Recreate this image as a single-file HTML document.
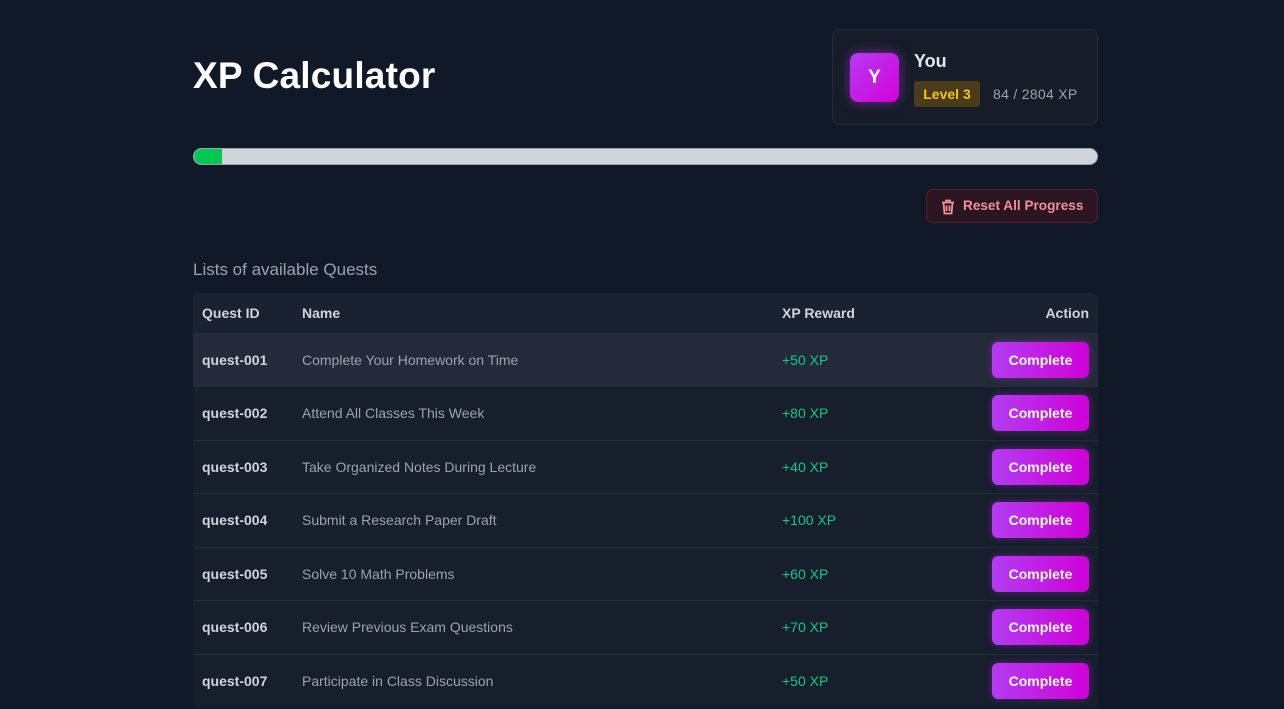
<!DOCTYPE html>
<html><head><style>
*{box-sizing:border-box;margin:0;padding:0}
body{width:1284px;height:709px;overflow:hidden;background:#111827;font-family:"Liberation Sans",sans-serif;color:#e5e7eb;position:relative}
.title{position:absolute;left:193px;top:55px;font-size:37px;font-weight:bold;color:#fff;letter-spacing:0.2px}
.card{position:absolute;left:832px;top:29px;width:266px;height:96px;border:1px solid #242b38;border-radius:8px;background:#161c28}
.av{position:absolute;left:17px;top:23px;width:49px;height:49px;border-radius:8px;background:linear-gradient(135deg,#b53cf5,#d400d8);box-shadow:0 0 12px rgba(190,60,245,.5);color:#fff;font-weight:bold;font-size:19px;text-align:center;line-height:49px}
.you{position:absolute;left:81px;top:21px;font-size:18px;font-weight:bold;color:#e5e7eb}
.lvl{position:absolute;left:81px;top:51px;width:66px;height:26px;background:#4a3c1a;border-radius:3px;color:#f5c518;font-size:14px;font-weight:bold;line-height:26px;text-align:center}
.xp{position:absolute;left:160px;top:56px;font-size:14px;color:#9ca3af;letter-spacing:0.3px}
.bar{position:absolute;left:193px;top:148px;width:905px;height:17px;border-radius:9px;background:#d1d5db;border:1px solid #9ca3af;overflow:hidden}
.bar div{width:28px;height:100%;background:#00c853;border-radius:9px 0 0 9px}
.reset{position:absolute;left:926px;top:189px;width:172px;height:34px;border:1px solid #5a1f2e;background:#2a1520;border-radius:7px;color:#f0909a;font-size:13.6px;font-weight:bold;line-height:32px;padding-left:36px}
.reset svg{position:absolute;left:14px;top:9px}
.sub{position:absolute;left:193px;top:260px;font-size:17px;color:#9ca3af}
table{position:absolute;left:193px;top:293px;width:905px;border-collapse:collapse;background:#171e2c;border-radius:6px;overflow:hidden}
th{height:40px;text-align:left;font-size:14px;font-weight:bold;color:#d1d5db;padding:0 9px;background:#1a2130}
td{height:53.5px;font-size:14px;color:#9ca3af;padding:0 9px;border-top:1px solid #252c3b;vertical-align:middle;line-height:20px}
td.id{font-weight:bold;color:#d1d5db}
td.g{color:#10c98a}
tr.h td{background:#242a39}
.btn{display:inline-block;vertical-align:middle;width:97px;height:36px;border-radius:6px;background:linear-gradient(90deg,#b33cf2,#d000d8);color:#fff;font-weight:bold;font-size:14px;line-height:36px;text-align:center;box-shadow:0 0 8px rgba(190,60,245,.35)}
</style></head><body>
<div class="title">XP Calculator</div>
<div class="card"><div class="av">Y</div><div class="you">You</div><div class="lvl">Level 3</div><div class="xp">84 / 2804 XP</div></div>
<div class="bar"><div></div></div>
<div class="reset"><svg width="14" height="16" viewBox="0 0 14 16" fill="none" stroke="#f0909a" stroke-width="1.8"><path d="M1 3.5h12M5 3.5V1.5h4v2M2.5 3.5l1 11h7l1-11M5.5 6.5v5.5M8.5 6.5v5.5"/></svg>Reset All Progress</div>
<div class="sub">Lists of available Quests</div>
<table>
<tr><th style="width:100px">Quest ID</th><th style="width:480px">Name</th><th>XP Reward</th><th style="text-align:right">Action</th></tr>
<tr class="h"><td class="id">quest-001</td><td>Complete Your Homework on Time</td><td class="g">+50 XP</td><td style="text-align:right"><span class="btn">Complete</span></td></tr>
<tr><td class="id">quest-002</td><td>Attend All Classes This Week</td><td class="g">+80 XP</td><td style="text-align:right"><span class="btn">Complete</span></td></tr>
<tr><td class="id">quest-003</td><td>Take Organized Notes During Lecture</td><td class="g">+40 XP</td><td style="text-align:right"><span class="btn">Complete</span></td></tr>
<tr><td class="id">quest-004</td><td>Submit a Research Paper Draft</td><td class="g">+100 XP</td><td style="text-align:right"><span class="btn">Complete</span></td></tr>
<tr><td class="id">quest-005</td><td>Solve 10 Math Problems</td><td class="g">+60 XP</td><td style="text-align:right"><span class="btn">Complete</span></td></tr>
<tr><td class="id">quest-006</td><td>Review Previous Exam Questions</td><td class="g">+70 XP</td><td style="text-align:right"><span class="btn">Complete</span></td></tr>
<tr><td class="id">quest-007</td><td>Participate in Class Discussion</td><td class="g">+50 XP</td><td style="text-align:right"><span class="btn">Complete</span></td></tr>
</table>
</body></html>
